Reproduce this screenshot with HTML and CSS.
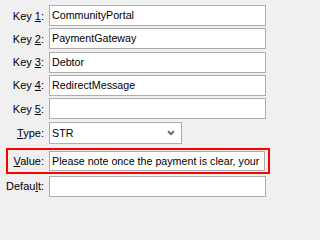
FILE: index.html
```html
<!DOCTYPE html>
<html>
<head>
<meta charset="utf-8">
<link rel="stylesheet" href="styles.css">
</head>
<body>
<div class="form">
  <div class="row">
    <label class="lbl">Key <u>1</u>:</label>
    <div class="field">CommunityPortal</div>
  </div>
  <div class="row">
    <label class="lbl">Key <u>2</u>:</label>
    <div class="field">PaymentGateway</div>
  </div>
  <div class="row">
    <label class="lbl">Key <u>3</u>:</label>
    <div class="field">Debtor</div>
  </div>
  <div class="row">
    <label class="lbl">Key <u>4</u>:</label>
    <div class="field">RedirectMessage</div>
  </div>
  <div class="row">
    <label class="lbl">Key <u>5</u>:</label>
    <div class="field"></div>
  </div>
  <div class="row row-select">
    <label class="lbl"><u>T</u>ype:</label>
    <div class="combo">
      <span class="combo-text">STR</span>
      <svg class="chev" width="8" height="6" viewBox="0 0 8 6"><path d="M1 1.2 L4 4.2 L7 1.2" fill="none" stroke="#606060" stroke-width="1.8"/></svg>
    </div>
  </div>
  <div class="highlight">
    <div class="row row-inner">
      <label class="lbl lbl-inner"><u>V</u>alue:</label>
      <div class="field field-value">Please note once the payment is clear, your</div>
    </div>
  </div>
  <div class="row row-last">
    <label class="lbl">Defau<u>l</u>t:</label>
    <div class="field"></div>
  </div>
</div>
</body>
</html>
```
FILE: styles.css
```css
html, body {
  margin: 0;
  padding: 0;
  background: #f0f0f0;
}
body {
  width: 271px;
  height: 202px;
  overflow: hidden;
  font-family: "Liberation Sans", Arial, sans-serif;
  font-size: 11px;
  color: #000;
}
.form {
  display: flex;
  flex-direction: column;
  padding-top: 5px;
}
.row {
  display: flex;
  align-items: center;
  height: 21px;
  margin-bottom: 2.33px;
}
.lbl {
  width: 44px;
  text-align: right;
  white-space: nowrap;
  color: #000;
}
.lbl u {
  text-decoration: underline;
  text-underline-offset: 1px;
}
.field {
  box-sizing: border-box;
  margin-left: 5px;
  width: 217px;
  height: 21px;
  background: #fff;
  border: 1px solid #adadad;
  padding: 0 2px;
  font-size: 10.7px;
  line-height: 19px;
  white-space: nowrap;
  overflow: hidden;
}
.row-select {
  height: 22px;
  margin-bottom: 4px;
}
.combo {
  box-sizing: border-box;
  margin-left: 5px;
  width: 133px;
  height: 22px;
  background: #fff;
  border: 1px solid #adadad;
  padding: 0 2px;
  font-size: 10.7px;
  display: flex;
  align-items: center;
  justify-content: space-between;
}
.combo-text {
  line-height: 20px;
}
.chev {
  margin-right: 4px;
  margin-top: 1px;
}
.highlight {
  box-sizing: border-box;
  margin-left: 6px;
  width: 264px;
  height: 26px;
  border: 2px solid #ff0000;
  padding: 1px 0 0 0;
  margin-bottom: 2px;
}
.row-inner {
  height: 20px;
  margin-bottom: 0;
}
.lbl-inner {
  width: 36px;
}
.field-value {
  height: 20px;
  width: 216px;
  line-height: 18px;
}
.row-last {
  margin-bottom: 0;
}
```
